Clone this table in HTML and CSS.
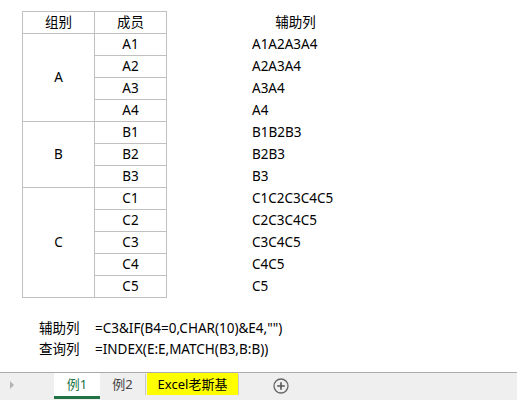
FILE: index.html
```html
<!DOCTYPE html>
<html lang="zh">
<head>
<meta charset="utf-8">
<link rel="stylesheet" href="styles.css">
</head>
<body>
<div class="sheet">
  <table class="grid">
    <tr><td class="c">组别</td><td class="c">成员</td><td class="h hh">辅助列</td></tr>
    <tr><td class="c" rowspan="4">A</td><td class="c">A1</td><td class="h">A1A2A3A4</td></tr>
    <tr><td class="c">A2</td><td class="h">A2A3A4</td></tr>
    <tr><td class="c">A3</td><td class="h">A3A4</td></tr>
    <tr><td class="c">A4</td><td class="h">A4</td></tr>
    <tr><td class="c" rowspan="3">B</td><td class="c">B1</td><td class="h">B1B2B3</td></tr>
    <tr><td class="c">B2</td><td class="h">B2B3</td></tr>
    <tr><td class="c">B3</td><td class="h">B3</td></tr>
    <tr><td class="c" rowspan="5">C</td><td class="c">C1</td><td class="h">C1C2C3C4C5</td></tr>
    <tr><td class="c">C2</td><td class="h">C2C3C4C5</td></tr>
    <tr><td class="c">C3</td><td class="h">C3C4C5</td></tr>
    <tr><td class="c">C4</td><td class="h">C4C5</td></tr>
    <tr><td class="c">C5</td><td class="h">C5</td></tr>
  </table>
  <div class="formulas">
    <span class="lbl">辅助列</span><span class="fx">=C3&amp;IF(B4=0,CHAR(10)&amp;E4,"")</span>
    <span class="lbl">查询列</span><span class="fx">=INDEX(E:E,MATCH(B3,B:B))</span>
  </div>
</div>
<div class="tabbar">
  <svg class="arrow" width="6" height="8" viewBox="0 0 6 8"><path d="M1 0 L5 4 L1 8 Z" fill="#b4b4b4"/></svg>
  <div class="tab active">例1</div>
  <div class="tab">例2</div>
  <div class="sep"></div>
  <div class="tab yellow">Excel老斯基</div>
  <div class="sep"></div>
  <svg class="plus" width="16" height="16" viewBox="0 0 16 16"><circle cx="8" cy="8" r="7" fill="none" stroke="#666" stroke-width="1.3"/><path d="M8 4.2 V11.8 M4.2 8 H11.8" stroke="#555" stroke-width="1.6"/></svg>
</div>
</body>
</html>
```
FILE: styles.css
```css
html, body {
  margin: 0;
  padding: 0;
  background: #fff;
}
body {
  width: 517px;
  height: 400px;
  overflow: hidden;
  font-family: "Noto Sans", "Noto Sans CJK SC", sans-serif;
  font-size: 13.5px;
  color: #000;
  display: flex;
  flex-direction: column;
}
.sheet {
  height: 372px;
  padding: 11px 0 0 22px;
  box-sizing: border-box;
}
.grid {
  border-collapse: collapse;
}
.grid td {
  height: 21px;
  padding: 0;
  line-height: 21px;
}
.grid td.c {
  width: 71px;
  text-align: center;
  border: 1px solid #c0c0c0;
}
.grid td.h {
  padding-left: 85px;
  width: 87px;
  text-align: left;
  border: none;
}
.grid td.hh {
  text-align: center;
}
.formulas {
  display: grid;
  grid-template-columns: 56px auto;
  row-gap: 0;
  margin: 20px 0 0 17px;
  line-height: 21px;
}
.tabbar {
  height: 28px;
  box-sizing: border-box;
  background: #efefef;
  border-top: 1px solid #ababab;
  display: flex;
  align-items: flex-start;
  font-size: 13px;
}
.arrow {
  margin: 8px 0 0 9px;
}
.tab {
  height: 23px;
  line-height: 22px;
  text-align: center;
  color: #444;
}
.tab.active {
  margin-left: 39px;
  width: 46px;
  background: #fff;
  color: #217346;
  border-bottom: 3px solid #217346;
}
.tab:nth-of-type(2) {
  width: 45px;
}
.sep {
  width: 1px;
  height: 21px;
  margin-top: 1px;
  background: #c8c8c8;
}
.tab.yellow {
  margin-left: 1px;
  width: 91px;
  height: 22px;
  background: #ffff00;
  color: #000;
}
.plus {
  margin: 5px 0 0 34px;
}
```
